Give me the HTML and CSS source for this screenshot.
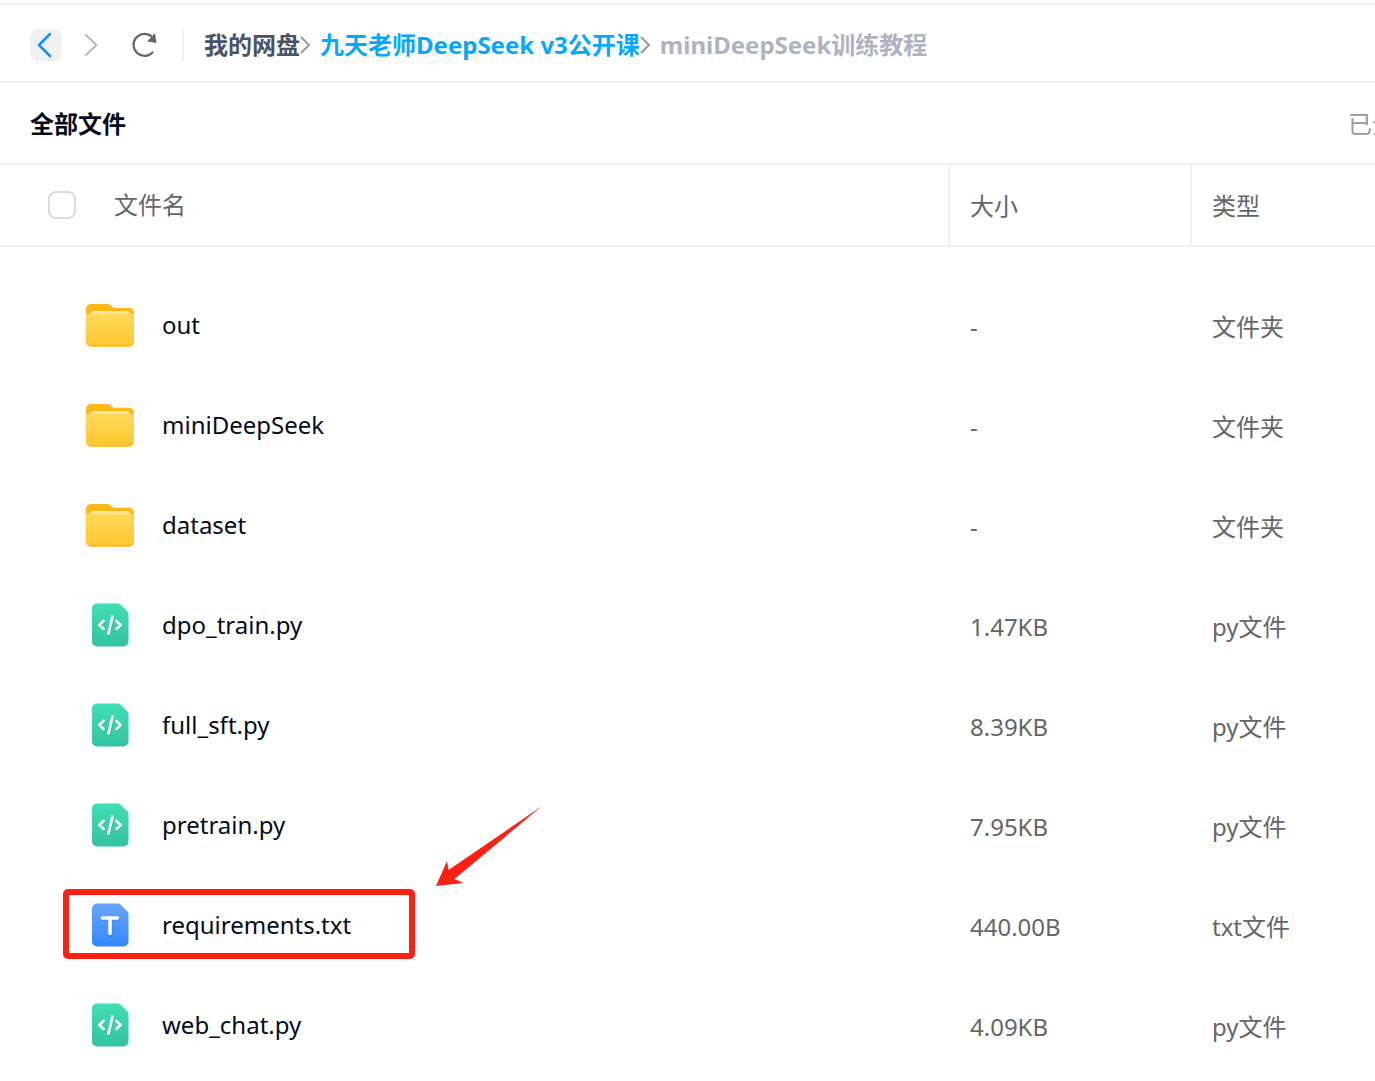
FILE: index.html
```html
<!DOCTYPE html>
<html lang="zh-CN">
<head>
    <meta charset="UTF-8">
    <meta name="viewport" content="width=device-width, initial-scale=1.0">
    <title>miniDeepSeek训练教程</title>
    <link rel="stylesheet" href="styles.css">
</head>
<body>
    <!-- shared icons -->
    <svg class="sprite" aria-hidden="true">
        <defs>
            <linearGradient id="folder-fill" x1="0" y1="0" x2="0" y2="1">
                <stop offset="0" stop-color="#ffd95c"/>
                <stop offset="1" stop-color="#ffc72e"/>
            </linearGradient>
            <linearGradient id="paper-fill" x1="0" y1="0" x2="0" y2="1">
                <stop offset="0" stop-color="#ffeaa8"/>
                <stop offset="1" stop-color="#ffe08a"/>
            </linearGradient>
            <linearGradient id="code-fill" x1="0" y1="0" x2="0" y2="1">
                <stop offset="0" stop-color="#3fdfb5"/>
                <stop offset="1" stop-color="#33c3a0"/>
            </linearGradient>
            <linearGradient id="text-fill" x1="0" y1="0" x2="0" y2="1">
                <stop offset="0" stop-color="#66a5ff"/>
                <stop offset="1" stop-color="#3388fb"/>
            </linearGradient>
        </defs>
        <symbol id="icon-folder" viewBox="0 0 48 48">
            <path d="M0 8a5 5 0 0 1 5-5h16q2 0 3.400 1.200l2 1.800q1 .8 2.600.8h14a5 5 0 0 1 5 5v29a5 5 0 0 1-5 5H5a5 5 0 0 1-5-5z" fill="#ffb916"/>
            <path d="M4 14v-1a3 3 0 0 1 3-3h34a3 3 0 0 1 3 3v1z" fill="url(#paper-fill)"/>
            <path d="M0 13h48v27a5 5 0 0 1-5 5H5a5 5 0 0 1-5-5z" fill="url(#folder-fill)"/>
            <path d="M0 40a5 5 0 0 0 5 5h38a5 5 0 0 0 5-5a5 5 0 0 1-5 4H5a5 5 0 0 1-5-4z" fill="#ffb916"/>
        </symbol>
        <symbol id="icon-code" viewBox="0 0 48 48">
            <path d="M11 2.500h21q1.500 0 2.500 1l7 7q1 1 1 2.500V40.500a5 5 0 0 1-5 5H11a5 5 0 0 1-5-5V7.500a5 5 0 0 1 5-5z" fill="url(#code-fill)"/>
            <g fill="none" stroke="#1fae8a" stroke-opacity=".4" stroke-width="3" stroke-linecap="round" stroke-linejoin="round">
                <path d="M18 21l-4 4 4 4M31 21l4 4-4 4M27 17l-4 17"/>
            </g>
            <g fill="none" stroke="#fff" stroke-width="2.800" stroke-linecap="round" stroke-linejoin="round">
                <path d="M17.500 20l-4 4 4 4M30.500 20l4 4-4 4M26.500 15.500l-4 17"/>
            </g>
        </symbol>
        <symbol id="icon-text" viewBox="0 0 48 48">
            <path d="M11 2.500h21q1.500 0 2.500 1l7 7q1 1 1 2.500V40.500a5 5 0 0 1-5 5H11a5 5 0 0 1-5-5V7.500a5 5 0 0 1 5-5z" fill="url(#text-fill)"/>
            <path d="M17 18h15M24.500 18.500v16" fill="none" stroke="#1d6ee0" stroke-opacity=".4" stroke-width="4" stroke-linecap="round"/>
            <path d="M16.500 17h15M24 17v15.500" fill="none" stroke="#fff" stroke-width="3.600" stroke-linecap="round"/>
        </symbol>
    </svg>

    <header class="toolbar">
        <button class="nav-btn active" type="button" aria-label="后退">
            <svg width="32" height="32" viewBox="0 0 32 32"><path d="M20 5L9 16l11 11" fill="none" stroke="#0696ff" stroke-width="2.500" stroke-linecap="round" stroke-linejoin="round"/></svg>
        </button>
        <button class="nav-btn" type="button" aria-label="前进">
            <svg width="32" height="32" viewBox="0 0 32 32"><path d="M10 6l10.500 10L10 26" fill="none" stroke="#b8b9bd" stroke-width="2" stroke-linecap="round" stroke-linejoin="round"/></svg>
        </button>
        <button class="nav-btn refresh" type="button" aria-label="刷新">
            <svg width="32" height="32" viewBox="0 0 32 32">
                <path d="M24.500 23.500A11 11 0 1 1 23 7" fill="none" stroke="#666" stroke-width="2.200" stroke-linecap="round"/>
                <path d="M27 4l1.500 10-9.500-1.500z" fill="#666"/>
            </svg>
        </button>
        <nav class="breadcrumb">
            <a class="root" href="#">我的网盘</a>
            <svg class="sep" width="12" height="20" viewBox="0 0 12 20"><path d="M1 2l8 8-8 8" fill="none" stroke="#999" stroke-width="2"/></svg>
            <a class="parent" href="#">九天老师DeepSeek v3公开课</a>
            <svg class="sep" width="12" height="20" viewBox="0 0 12 20"><path d="M1 2l8 8-8 8" fill="none" stroke="#999" stroke-width="2"/></svg>
            <span class="current">miniDeepSeek训练教程</span>
        </nav>
    </header>

    <div class="title-bar">
        <h1>全部文件</h1>
        <span class="load-state">已全</span>
    </div>

    <table class="file-table">
        <thead>
            <tr>
                <th class="col-name">
                    <div class="head-name">
                        <input type="checkbox" id="check-all">
                        <label for="check-all">文件名</label>
                    </div>
                </th>
                <th class="col-size">大小</th>
                <th class="col-type">类型</th>
            </tr>
        </thead>
        <tbody>
            <tr>
                <td><div class="file"><svg class="icon"><use href="#icon-folder"/></svg><span>out</span></div></td>
                <td>-</td>
                <td>文件夹</td>
            </tr>
            <tr>
                <td><div class="file"><svg class="icon"><use href="#icon-folder"/></svg><span>miniDeepSeek</span></div></td>
                <td>-</td>
                <td>文件夹</td>
            </tr>
            <tr>
                <td><div class="file"><svg class="icon"><use href="#icon-folder"/></svg><span>dataset</span></div></td>
                <td>-</td>
                <td>文件夹</td>
            </tr>
            <tr>
                <td><div class="file"><svg class="icon"><use href="#icon-code"/></svg><span>dpo_train.py</span></div></td>
                <td>1.47KB</td>
                <td>py文件</td>
            </tr>
            <tr>
                <td><div class="file"><svg class="icon"><use href="#icon-code"/></svg><span>full_sft.py</span></div></td>
                <td>8.39KB</td>
                <td>py文件</td>
            </tr>
            <tr>
                <td><div class="file"><svg class="icon"><use href="#icon-code"/></svg><span>pretrain.py</span></div></td>
                <td>7.95KB</td>
                <td>py文件</td>
            </tr>
            <tr>
                <td>
                    <div class="file marked">
                        <svg class="icon"><use href="#icon-text"/></svg><span>requirements.txt</span>
                        <svg class="arrow" width="106" height="80" viewBox="0 0 106 80"><path d="M0 80L11 55l1.500 9L106 0 18.500 73l9 4z" fill="#ff2013"/></svg>
                    </div>
                </td>
                <td>440.00B</td>
                <td>txt文件</td>
            </tr>
            <tr>
                <td><div class="file"><svg class="icon"><use href="#icon-code"/></svg><span>web_chat.py</span></div></td>
                <td>4.09KB</td>
                <td>py文件</td>
            </tr>
        </tbody>
    </table>
</body>
</html>
```

FILE: styles.css
```css
*,
*::before,
*::after {
    box-sizing: border-box;
}

body {
    margin: 0;
    padding-top: 3px;
    background-color: #fff;
    color: #666;
    font-family: "Noto Sans", "Noto Sans CJK SC", sans-serif;
    font-size: 24px;
    line-height: 36px;
}

.sprite {
    position: absolute;
    width: 0;
    height: 0;
}

.toolbar {
    display: flex;
    align-items: center;
    height: 80px;
    padding: 4px 30px 0;
    border-top: 2px solid #f1f1f2;
    border-bottom: 2px solid #f1f1f2;
}

.nav-btn {
    width: 32px;
    height: 32px;
    margin-right: 14px;
    padding: 0;
    border: none;
    border-radius: 8px;
    background: none;
    cursor: pointer;
}

.nav-btn svg {
    display: block;
}

.nav-btn.active {
    background-color: #f1f1f2;
}

.nav-btn.refresh {
    margin: 0 22px 0 6px;
}

.breadcrumb {
    display: flex;
    align-items: center;
    height: 32px;
    padding-left: 20px;
    border-left: 2px solid #f1f1f4;
    font-weight: bold;
    white-space: nowrap;
}

.breadcrumb a {
    text-decoration: none;
}

.breadcrumb .root {
    color: #495366;
}

.breadcrumb .parent {
    color: #06a7ff;
}

.breadcrumb .current {
    color: #afb3bf;
}

.sep {
    margin-right: 8px;
}

.title-bar {
    display: flex;
    align-items: center;
    justify-content: space-between;
    height: 82px;
    padding: 2px 0 0 30px;
    border-bottom: 2px solid #f1f1f2;
}

.title-bar h1 {
    margin: 0;
    color: #030b1a;
    font-size: 24px;
}

.load-state {
    width: 27px;
    overflow: hidden;
    color: #999;
    white-space: nowrap;
}

.file-table {
    width: 100%;
    border-spacing: 0;
    table-layout: fixed;
}

.file-table th {
    height: 82px;
    padding: 2px 20px 0;
    border-bottom: 2px solid #f1f1f2;
    border-left: 2px solid #f1f1f2;
    font-weight: normal;
    text-align: left;
}

.file-table .col-name {
    padding: 0 0 0 48px;
    border-left: none;
}

.col-size {
    width: 242px;
}

.col-type {
    width: 185px;
}

.head-name {
    display: flex;
    align-items: center;
    gap: 38px;
}

.head-name input {
    width: 28px;
    height: 28px;
    margin: 0;
    border: 2px solid #dcdcdc;
    border-radius: 8px;
    appearance: none;
    background-color: #fff;
}

/* space between the header and the first row */
.file-table tbody::before {
    content: "";
    display: block;
    height: 28px;
}

.file-table td {
    height: 100px;
    padding: 3px 0 0 22px;
}

.file-table td:first-child {
    padding: 0;
}

.file {
    display: flex;
    align-items: center;
    gap: 28px;
    height: 100px;
    padding-left: 86px;
    color: #030b1a;
}

.icon {
    width: 48px;
    height: 48px;
}

.marked {
    position: relative;
}

.marked::after {
    content: "";
    position: absolute;
    top: 14px;
    left: 63px;
    width: 352px;
    height: 70px;
    border: 6px solid #ff2013;
    border-radius: 5px;
}

.arrow {
    position: absolute;
    top: -69px;
    left: 436px;
}
```
